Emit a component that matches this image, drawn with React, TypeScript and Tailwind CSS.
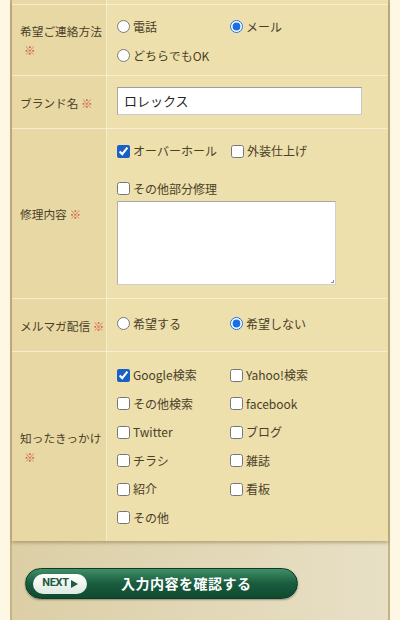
import React from "react";

const font = { fontFamily: '"Noto Sans CJK JP", "Noto Sans", sans-serif' };

function Req() {
  return <span className="text-[#d4543e]">※</span>;
}

function Radio({ label, checked, name }: { label: string; checked?: boolean; name: string }) {
  return (
    <label className="flex items-center gap-[3px] h-[29px]">
      <input type="radio" defaultChecked={checked} name={name} className="m-0 w-[13px] h-[13px] accent-[#1a6fe0]" />
      <span>{label}</span>
    </label>
  );
}

function Check({ label, checked }: { label: string; checked?: boolean }) {
  return (
    <label className="flex items-center gap-[3px] h-[28.5px]">
      <input type="checkbox" defaultChecked={checked} className="m-0 w-[13px] h-[13px] accent-[#1a5fc8]" />
      <span>{label}</span>
    </label>
  );
}

function Row({ label, children, className }: { label: React.ReactNode; children: React.ReactNode; className?: string }) {
  return (
    <div className={"flex border-b border-[#f7eed0] " + (className ?? "")}>
      <div className="w-[95px] shrink-0 bg-[#e8d9a4] border-r border-[#f5ecca] flex items-center pl-[8px] leading-[19px] text-[11.7px] whitespace-nowrap">
        <div>{label}</div>
      </div>
      <div className="flex-1 bg-[#ede0ad] pl-[10px]">{children}</div>
    </div>
  );
}

export default function App() {
  return (
    <div className="w-[400px] h-[620px] overflow-hidden bg-[#fdf7e4] text-[#4a3f28]" style={font}>
      <div className="ml-[10px] w-[380px] h-[620px] border-x-2 border-[#c4b485] bg-gradient-to-r from-[#dccfa6] to-[#e8e0c6] flex flex-col">
        <div className="shadow-[0_2px_3px_rgba(120,100,50,0.45)]">
          <div className="flex h-[5px] border-b border-[#f7eed0]">
            <div className="w-[95px] bg-[#e8d9a4] border-r border-[#f5ecca]" />
            <div className="flex-1 bg-[#ede0ad]" />
          </div>
          <Row label={<>希望ご連絡方法<br /><span className="pl-[4px]"><Req /></span></>} className="h-[71px]">
            <div className="text-[12px] pt-[7px] grid grid-cols-[113px_1fr]">
              <Radio name="contact" label="電話" />
              <Radio name="contact" label="メール" checked />
              <Radio name="contact" label="どちらでもOK" />
            </div>
          </Row>
          <Row label={<>ブランド名 <Req /></>} className="h-[53px]">
            <div className="pt-[11px]">
              <div className="w-[245px] h-[28px] bg-white border border-[#c9c9c9] border-t-[#9c9c9c] border-l-[#a8a8a8] flex items-center pl-[6px] text-[13px] text-[#222]">
                ロレックス
              </div>
            </div>
          </Row>
          <Row label={<>修理内容 <Req /></>} className="h-[170px]">
            <div className="text-[12px] pt-[8px]">
              <div className="flex gap-[14px]">
                <Check label="オーバーホール" checked />
                <Check label="外装仕上げ" />
              </div>
              <div className="mt-[9px]">
                <Check label="その他部分修理" />
              </div>
              <div className="mt-[-2px] w-[219px] h-[84px] bg-white border border-[#d0d0d0] border-t-[#a8a8a8] border-l-[#b0b0b0] relative">
                <div className="absolute right-[1px] bottom-[1px] w-[3px] h-[3px] border-r border-b border-[#888]" />
              </div>
            </div>
          </Row>
          <Row label={<>メルマガ配信 <Req /></>} className="h-[53px]">
            <div className="text-[12px] pt-[10px] grid grid-cols-[113px_1fr]">
              <Radio name="mag" label="希望する" />
              <Radio name="mag" label="希望しない" checked />
            </div>
          </Row>
          <Row label={<>知ったきっかけ<br /><span className="pl-[4px]"><Req /></span></>} className="h-[189px] border-b-0">
            <div className="text-[12px] pt-[9px] grid grid-cols-[113px_1fr]">
              <Check label="Google検索" checked />
              <Check label="Yahoo!検索" />
              <Check label="その他検索" />
              <Check label="facebook" />
              <Check label="Twitter" />
              <Check label="ブログ" />
              <Check label="チラシ" />
              <Check label="雑誌" />
              <Check label="紹介" />
              <Check label="看板" />
              <Check label="その他" />
            </div>
          </Row>
        </div>
        <div className="pl-[13px] pt-[27px]">
          <button className="relative w-[273px] h-[31px] rounded-full border border-[#0d3b27] bg-gradient-to-b from-[#3f8f67] via-[#1a5c3e] to-[#0f4a30] shadow-[0_1px_2px_rgba(0,0,0,0.35)] flex items-center">
            <span className="ml-[7px] w-[54px] h-[20px] rounded-full bg-gradient-to-b from-white to-[#dfe9e3] flex items-center justify-center gap-[2px] text-[#1d5a3e] text-[11px] font-bold tracking-tight" style={{ fontFamily: '"Liberation Sans Narrow", "Roboto", sans-serif' }}>
              NEXT
              <svg width="7" height="8" viewBox="0 0 7 8"><path d="M0 0 L7 4 L0 8 Z" fill="#1d5a3e" /></svg>
            </span>
            <span className="ml-[34px] text-white text-[14px] font-bold tracking-[0.5px]">入力内容を確認する</span>
          </button>
        </div>
      </div>
    </div>
  );
}
